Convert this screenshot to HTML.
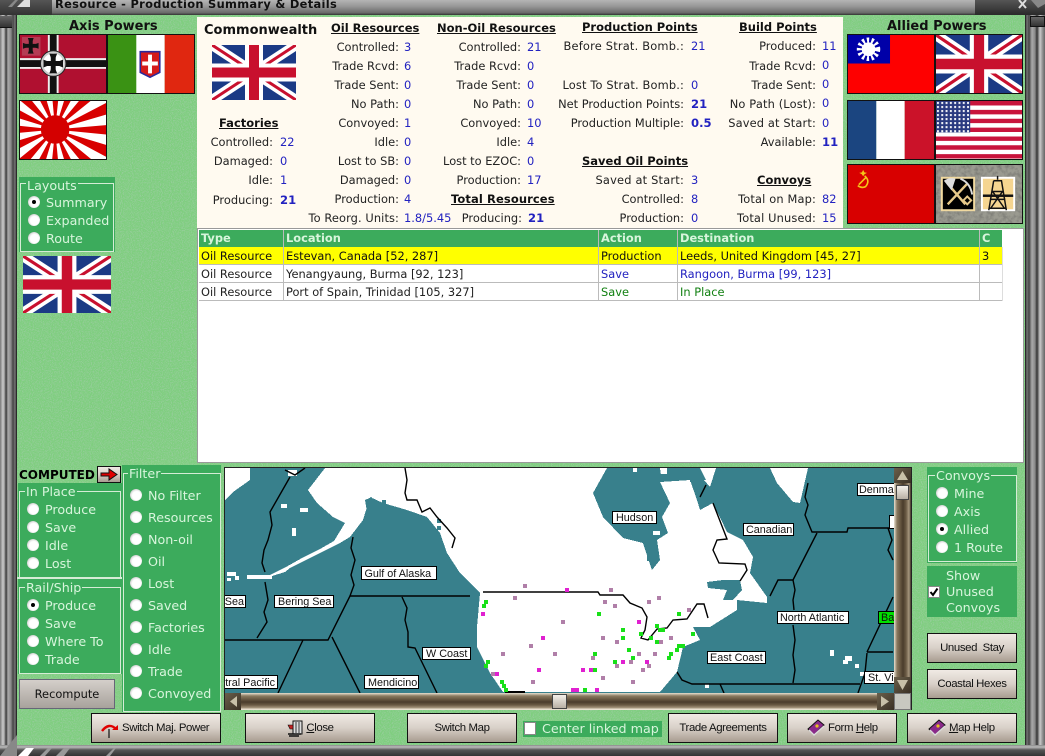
<!DOCTYPE html>
<html><head><meta charset="utf-8"><title>Resource - Production Summary &amp; Details</title>
<style>
html,body{margin:0;padding:0;background:#333;}
#p{position:relative;width:1045px;height:756px;overflow:hidden;font-family:"DejaVu Sans",sans-serif;font-size:11.4px;color:#222;}
#p div,#p svg,#p b,#p i,#p u.h{position:absolute;}
i{font-style:normal;white-space:nowrap;line-height:14px;}
.v{color:#2222c0;}
b.v{font-weight:bold;font-size:11.6px;line-height:14px;white-space:nowrap;}
u.h{font-weight:bold;font-size:11.5px;line-height:14px;white-space:nowrap;color:#111;}
.g{background:#3cab5c;}
.f{border:1.5px solid #d6ecd6;box-sizing:border-box;}
.t{color:#d8f5dc;font-size:12.7px;line-height:16px;white-space:nowrap;}
.lg{background:#3cab5c;padding:0 1px;}
.r{width:12px;height:12px;border-radius:50%;background:radial-gradient(circle at 55% 55%,#fff 45%,#e4e4e4 62%,#888 100%);}
.r.c::after{content:"";position:absolute;left:4px;top:4px;width:4px;height:4px;border-radius:50%;background:#000;}
.b{box-sizing:border-box;border:1px solid #111;background:linear-gradient(180deg,#f0eae4 0%,#d8d0c8 50%,#a89c90 100%);font-family:"Liberation Sans",sans-serif;font-size:11.4px;letter-spacing:-.38px;color:#111;text-align:center;line-height:27px;white-space:nowrap;}
.fl{box-sizing:border-box;border:1.5px solid #111;overflow:hidden;}
.fl svg{left:0;top:0;width:100%;height:100%;}
.tb{font-weight:bold;color:#d8f5dc;}
.row{left:199px;width:803px;height:18px;border-bottom:1px solid #bbb;box-sizing:border-box;}
</style></head><body><div id="p">

<svg width="0" height="0" style="left:0;top:0"><defs>
<symbol id="uk" viewBox="0 0 84 55" preserveAspectRatio="none">
<rect width="84" height="55" fill="#1b3a85"/>
<path d="M0 0L84 55M84 0L0 55" stroke="#fff" stroke-width="10"/>
<path d="M0 0L42 27.5M84 55L42 27.5M84 0L42 27.5M0 55L42 27.5" stroke="#c8102e" stroke-width="3"/>
<path d="M42 0V55M0 27.5H84" stroke="#fff" stroke-width="18"/>
<path d="M42 0V55M0 27.5H84" stroke="#c8102e" stroke-width="10"/>
</symbol>
<filter id="nz" x="0" y="0" width="100%" height="100%"><feTurbulence type="fractalNoise" baseFrequency="0.9" numOctaves="2" seed="4"/><feColorMatrix values="0 0 0 0 .3  0 0 0 0 .62  0 0 0 0 .32  4 0 0 0 -1.75"/></filter>
<pattern id="st" width="4.4" height="4.1" patternUnits="userSpaceOnUse"><rect width="4.4" height="4.1" fill="#2a3a80"/><rect x="1" y="1" width="2" height="2" fill="#fff"/></pattern>
</defs></svg>

<!-- background -->
<div style="left:0;top:0;width:1045px;height:756px;background:#7fce7f"></div>
<svg style="left:17px;top:15px" width="1008" height="731"><rect width="1008" height="731" filter="url(#nz)"/></svg>

<!-- window chrome -->
<div style="left:0;top:0;width:1045px;height:15px;background:linear-gradient(180deg,#b5b5b5,#999 40%,#6a6a6a 85%,#333)"></div>
<div style="left:0;top:0;width:52px;height:15px;background:linear-gradient(180deg,#555,#333)"></div>
<svg style="left:8px;top:0" width="22" height="8"><path d="M9 7L16 0H22V7Z" fill="#ddd"/><path d="M0 7L7 0H10L4 7Z" fill="#888"/></svg>
<div style="left:975px;top:0;width:70px;height:15px;background:linear-gradient(180deg,#555,#2a2a2a)"></div>
<svg style="left:1018px;top:0" width="27" height="9"><path d="M1 0L8 8M8 0L1 8" stroke="#ddd" stroke-width="2"/><path d="M13 0H27V4L20 8Z" fill="#888"/></svg>
<i style="left:55px;top:-3px;font-weight:bold;font-size:11.4px;line-height:14px;letter-spacing:.32px;color:#111">Resource - Production Summary &amp; Details</i>

<div style="left:0;top:15px;width:17px;height:741px;background:linear-gradient(90deg,#777 0,#ccc 3px,#888 5px,#333 6px,#aaa 8px,#888 11px,#444 13px,#777 15px,#111 17px)"></div>
<div style="left:0;top:16px;width:12px;height:11px;background:linear-gradient(180deg,#666,#333);border-bottom:1px solid #111"></div>
<div style="left:1025px;top:15px;width:20px;height:741px;background:linear-gradient(90deg,#111 0,#777 2px,#444 4px,#aaa 7px,#888 10px,#333 12px,#ccc 15px,#888 18px,#666 20px)"></div>
<div style="left:1030px;top:16px;width:15px;height:11px;background:linear-gradient(180deg,#666,#333);border:1px solid #111;box-sizing:border-box"></div>
<div style="left:0;top:745px;width:1045px;height:11px;background:linear-gradient(180deg,#888,#bbb 2px,#555 5px,#333 11px)"></div>
<svg style="left:16px;top:746px" width="100" height="10"><path d="M2 10L10 2H18L12 10Z" fill="#fff"/><path d="M24 10L32 2H36L29 10ZM40 10L48 2H54L48 10Z" fill="#999"/><path d="M90 10L98 2H100L94 10Z" fill="#999"/></svg>
<svg style="left:0;top:735px" width="17" height="21"><path d="M0 21L17 0V21Z" fill="#888"/></svg>

<!-- Axis -->
<i style="left:69px;top:20px;font-weight:bold;font-size:13px;color:#111">Axis Powers</i>
<div class="fl" style="left:19px;top:34px;width:88px;height:60px"><svg viewBox="0 0 88 59" preserveAspectRatio="none">
<rect width="88" height="59" fill="#b01030"/>
<path d="M34 0V59M0 29H88" stroke="#eee" stroke-width="11"/><path d="M34 0V59M0 29H88" stroke="#111" stroke-width="7"/>
<circle cx="34" cy="29" r="13" fill="#ccc" stroke="#222"/><circle cx="34" cy="29" r="10.5" fill="#fff"/>
<path d="M34 20V38M25 29H43" stroke="#111" stroke-width="5"/><path d="M30 19H38L34 29ZM30 39H38L34 29ZM24 25V33L34 29ZM44 25V33L34 29Z" fill="#111"/>
<rect x="2" y="2" width="19" height="19" fill="#c0c0c0" opacity=".25"/>
<path d="M11 4V18M4 11H18" stroke="#111" stroke-width="4"/><path d="M8 3H14L11 11ZM8 19H14L11 11ZM3 8V14L11 11ZM19 8V14L11 11Z" fill="#111"/>
</svg></div>
<div class="fl" style="left:107px;top:34px;width:88px;height:60px"><svg viewBox="0 0 88 59" preserveAspectRatio="none">
<rect width="29" height="59" fill="#3a9214"/><rect x="29" width="29" height="59" fill="#fff"/><rect x="58" width="30" height="59" fill="#e02710"/>
<path d="M33 17H53V38L43 43L33 38Z" fill="#d41a1a" stroke="#2a2a9a" stroke-width="1.6"/><path d="M43 20V39M35 29H51" stroke="#fff" stroke-width="4"/>
</svg></div>
<div class="fl" style="left:19px;top:100px;width:88px;height:60px"><svg viewBox="0 0 88 59" preserveAspectRatio="xMidYMid slice">
<rect width="88" height="59" fill="#fff"/>
<circle cx="36" cy="29" r="50" fill="none" stroke="#d80000" stroke-width="100" stroke-dasharray="9.817 9.817" stroke-dashoffset="4.9"/>
<circle cx="36" cy="29" r="14.5" fill="#d40000"/>
</svg></div>

<!-- Layouts -->
<div class="g" style="left:19px;top:177px;width:96px;height:75px"></div>
<div class="f" style="left:20px;top:183px;width:94px;height:69px"></div>
<div class="t lg" style="left:26px;top:178px">Layouts</div>
<div class="r c" style="left:28px;top:196px"></div><div class="t" style="left:46px;top:195px">Summary</div>
<div class="r" style="left:28px;top:214px"></div><div class="t" style="left:46px;top:213px">Expanded</div>
<div class="r" style="left:28px;top:232px"></div><div class="t" style="left:46px;top:231px">Route</div>
<svg style="left:23px;top:256px" width="88" height="57"><use href="#uk" width="88" height="57"/></svg>

<!-- Summary panel -->
<div style="left:197px;top:17px;width:646px;height:211px;background:#fffaf0"></div>
<i style="left:204px;top:24px;font-weight:bold;font-size:13px;color:#111">Commonwealth</i>
<svg style="left:212px;top:45px" width="84" height="55"><use href="#uk" width="84" height="55"/></svg>

<u class="h" style="left:219px;top:116px">Factories</u>
<i style="right:772px;top:135px">Controlled:</i><i class="v" style="left:280px;top:135px">22</i>
<i style="right:772px;top:154px">Damaged:</i><i class="v" style="left:280px;top:154px">0</i>
<i style="right:772px;top:173px">Idle:</i><i class="v" style="left:280px;top:173px">1</i>
<i style="right:772px;top:193px">Producing:</i><b class="v" style="left:280px;top:193px">21</b>

<u class="h" style="left:331px;top:21px">Oil Resources</u>
<i style="right:646px;top:40px">Controlled:</i><i class="v" style="left:404px;top:40px">3</i>
<i style="right:646px;top:59px">Trade Rcvd:</i><i class="v" style="left:404px;top:59px">6</i>
<i style="right:646px;top:78px">Trade Sent:</i><i class="v" style="left:404px;top:78px">0</i>
<i style="right:646px;top:97px">No Path:</i><i class="v" style="left:404px;top:97px">0</i>
<i style="right:646px;top:116px">Convoyed:</i><i class="v" style="left:404px;top:116px">1</i>
<i style="right:646px;top:135px">Idle:</i><i class="v" style="left:404px;top:135px">0</i>
<i style="right:646px;top:154px">Lost to SB:</i><i class="v" style="left:404px;top:154px">0</i>
<i style="right:646px;top:173px">Damaged:</i><i class="v" style="left:404px;top:173px">0</i>
<i style="right:646px;top:192px">Production:</i><i class="v" style="left:404px;top:192px">4</i>
<i style="right:646px;top:211px;letter-spacing:.1px">To Reorg. Units:</i><i class="v" style="left:404px;top:211px">1.8/5.45</i>

<u class="h" style="left:437px;top:21px">Non-Oil Resources</u>
<i style="right:524px;top:40px">Controlled:</i><i class="v" style="left:527px;top:40px">21</i>
<i style="right:524px;top:59px">Trade Rcvd:</i><i class="v" style="left:527px;top:59px">0</i>
<i style="right:524px;top:78px">Trade Sent:</i><i class="v" style="left:527px;top:78px">0</i>
<i style="right:524px;top:97px">No Path:</i><i class="v" style="left:527px;top:97px">0</i>
<i style="right:524px;top:116px">Convoyed:</i><i class="v" style="left:527px;top:116px">10</i>
<i style="right:524px;top:135px">Idle:</i><i class="v" style="left:527px;top:135px">4</i>
<i style="right:524px;top:154px">Lost to EZOC:</i><i class="v" style="left:527px;top:154px">0</i>
<i style="right:524px;top:173px">Production:</i><i class="v" style="left:527px;top:173px">17</i>
<u class="h" style="left:451px;top:192px;letter-spacing:.1px">Total Resources</u>
<i style="right:523px;top:211px">Producing:</i><b class="v" style="left:528px;top:211px">21</b>

<u class="h" style="left:582px;top:20px">Production Points</u>
<i style="right:361px;top:39px;letter-spacing:.2px">Before Strat. Bomb.:</i><i class="v" style="left:691px;top:39px">21</i>
<i style="right:361px;top:78px;letter-spacing:.15px">Lost To Strat. Bomb.:</i><i class="v" style="left:691px;top:78px">0</i>
<i style="right:361px;top:97px">Net Production Points:</i><b class="v" style="left:691px;top:97px">21</b>
<i style="right:361px;top:116px">Production Multiple:</i><b class="v" style="left:691px;top:116px">0.5</b>
<u class="h" style="left:582px;top:154px">Saved Oil Points</u>
<i style="right:361px;top:173px;letter-spacing:.2px">Saved at Start:</i><i class="v" style="left:691px;top:173px">3</i>
<i style="right:361px;top:192px">Controlled:</i><i class="v" style="left:691px;top:192px">8</i>
<i style="right:361px;top:211px">Production:</i><i class="v" style="left:691px;top:211px">0</i>

<u class="h" style="left:739px;top:20px">Build Points</u>
<i style="right:229px;top:39px">Produced:</i><i class="v" style="left:822px;top:39px">11</i>
<i style="right:229px;top:59px">Trade Rcvd:</i><i class="v" style="left:822px;top:58px">0</i>
<i style="right:229px;top:78px">Trade Sent:</i><i class="v" style="left:822px;top:77px">0</i>
<i style="right:229px;top:97px;letter-spacing:.15px">No Path (Lost):</i><i class="v" style="left:822px;top:96px">0</i>
<i style="right:229px;top:116px;letter-spacing:.15px">Saved at Start:</i><i class="v" style="left:822px;top:116px">0</i>
<i style="right:229px;top:135px">Available:</i><b class="v" style="left:822px;top:135px">11</b>
<u class="h" style="left:757px;top:173px">Convoys</u>
<i style="right:229px;top:192px;letter-spacing:.15px">Total on Map:</i><i class="v" style="left:822px;top:192px">82</i>
<i style="right:229px;top:211px;letter-spacing:.15px">Total Unused:</i><i class="v" style="left:822px;top:211px">15</i>

<!-- Allied -->
<i style="left:887px;top:20px;font-weight:bold;font-size:13px;color:#111">Allied Powers</i>
<div class="fl" style="left:847px;top:34px;width:88px;height:60px"><svg viewBox="0 0 88 59" preserveAspectRatio="none">
<rect width="88" height="59" fill="#fe0000"/><rect width="43" height="29" fill="#0000a8"/>
<circle cx="21" cy="14.5" r="8" fill="none" stroke="#fff" stroke-width="8" stroke-dasharray="2 2"/><circle cx="21" cy="14.5" r="7" fill="#fff"/>
</svg></div>
<div class="fl" style="left:935px;top:34px;width:88px;height:60px"><svg viewBox="0 0 88 59" preserveAspectRatio="none"><use href="#uk" width="88" height="59"/></svg></div>
<div class="fl" style="left:847px;top:100px;width:88px;height:60px"><svg viewBox="0 0 88 59" preserveAspectRatio="none">
<rect width="29" height="59" fill="#1b4580"/><rect x="29" width="29" height="59" fill="#fff"/><rect x="58" width="30" height="59" fill="#cb1229"/>
</svg></div>
<div class="fl" style="left:935px;top:100px;width:88px;height:60px"><svg viewBox="0 0 88 59" preserveAspectRatio="none">
<rect width="88" height="59" fill="#fff"/>
<path d="M0 2.3H88M0 11.3H88M0 20.3H88M0 29.3H88M0 38.3H88M0 47.3H88M0 56.3H88" stroke="#c8143c" stroke-width="4.5"/>
<rect width="35" height="32" fill="url(#st)"/>
</svg></div>
<div class="fl" style="left:847px;top:164px;width:88px;height:60px"><svg viewBox="0 0 88 59" preserveAspectRatio="none">
<rect width="88" height="59" fill="#d80000"/>
<path d="M11 20L18 13M17 11Q23 16 18 22Q14 24 10 21" fill="none" stroke="#f5c518" stroke-width="1.6"/><path d="M15.5 5L16.8 7.5L19.5 8L17 9.3L15.5 11.5L14 9.3L11.5 8L14.2 7.5Z" fill="#f5c518"/>
</svg></div>
<div class="fl" style="left:935px;top:164px;width:88px;height:60px;background:#85857c"><svg viewBox="0 0 88 59" preserveAspectRatio="none">
<defs><filter id="stn" x="0" y="0" width="100%" height="100%"><feTurbulence type="fractalNoise" baseFrequency=".25" numOctaves="3" seed="7"/><feColorMatrix values="0 0 0 0 .2 0 0 0 0 .2 0 0 0 0 .18 2.2 0 0 0 -.85"/></filter></defs>
<rect width="88" height="59" fill="#9a9a90"/><rect width="88" height="59" filter="url(#stn)"/>
<rect x="6" y="13" width="33" height="33" fill="#000" stroke="#f0d9a0" stroke-width="2"/>
<path d="M12 40L32 19M12 19L30 40" stroke="#e6c98a" stroke-width="2.5"/><path d="M8 16Q14 12 20 14L16 26Z" fill="#ddd"/><path d="M25 14Q35 18 37 30" fill="none" stroke="#ddd" stroke-width="2"/><path d="M28 36L32 32L36 36L32 40Z" fill="none" stroke="#e6c98a" stroke-width="2"/>
<rect x="47" y="13" width="33" height="33" fill="#f5d590" stroke="#fff" stroke-width="2"/>
<path d="M63 11V15M59 16H67L72 46M59 16L54 46M57 27H69M56 35H71M55 44H72M58 27L70 44M68 27L56 44" fill="none" stroke="#111" stroke-width="1.5"/><rect x="48" y="30" width="31" height="2.5" fill="#111"/>
</svg></div>

<!-- Table -->
<div style="left:197px;top:228px;width:827px;height:235px;background:#fff;border:1px solid #999;box-sizing:border-box"></div>
<div class="g" style="left:199px;top:230px;width:781px;height:17px"></div>
<div class="g" style="left:980px;top:230px;width:22px;height:17px"></div>
<div style="left:199px;top:247px;width:803px;height:18px;background:#ffff00"></div>
<div class="row" style="top:247px"></div><div class="row" style="top:265px"></div><div class="row" style="top:283px"></div>
<div style="left:283px;top:230px;width:1px;height:71px;background:#bbb"></div>
<div style="left:598px;top:230px;width:1px;height:71px;background:#bbb"></div>
<div style="left:677px;top:230px;width:1px;height:71px;background:#bbb"></div>
<div style="left:979px;top:230px;width:1px;height:71px;background:#bbb"></div>
<div style="left:1002px;top:247px;width:1px;height:54px;background:#ddd"></div>
<i class="tb" style="left:201px;top:231px">Type</i><i class="tb" style="left:286px;top:231px">Location</i><i class="tb" style="left:601px;top:231px">Action</i><i class="tb" style="left:680px;top:231px">Destination</i><i class="tb" style="left:982px;top:231px">C</i>
<i style="left:201px;top:249px;color:#111">Oil Resource</i><i style="left:286px;top:249px;color:#111">Estevan, Canada [52, 287]</i><i style="left:601px;top:249px;color:#111">Production</i><i style="left:680px;top:249px;color:#111">Leeds, United Kingdom [45, 27]</i><i style="left:982px;top:249px;color:#111">3</i>
<i style="left:201px;top:267px">Oil Resource</i><i style="left:286px;top:267px">Yenangyaung, Burma [92, 123]</i><i style="left:601px;top:267px;color:#2222c0">Save</i><i style="left:680px;top:267px;color:#2222c0">Rangoon, Burma [99, 123]</i>
<i style="left:201px;top:285px">Oil Resource</i><i style="left:286px;top:285px">Port of Spain, Trinidad [105, 327]</i><i style="left:601px;top:285px;color:#128012">Save</i><i style="left:680px;top:285px;color:#128012">In Place</i>

<!-- Computed -->
<i style="left:19px;top:468px;font-weight:bold;font-size:12px;color:#000">COMPUTED</i>
<div class="b" style="left:97px;top:466px;width:24px;height:17px"></div>
<svg style="left:100px;top:468px" width="19" height="13"><path d="M1 5H9V1L17 6.5L9 12V8H1Z" fill="#e00000" stroke="#111" stroke-width="1"/></svg>

<!-- In place / rail -->
<div class="g" style="left:18px;top:483px;width:104px;height:191px"></div>
<div class="f" style="left:19px;top:491px;width:102px;height:87px"></div>
<div class="f" style="left:19px;top:587px;width:102px;height:87px"></div>
<div style="left:17px;top:577px;width:105px;height:2px;background:#d6ecd6"></div>
<div class="t lg" style="left:25px;top:484px">In Place</div>
<div class="r" style="left:27px;top:503px"></div><div class="t" style="left:45px;top:502px">Produce</div>
<div class="r" style="left:27px;top:521px"></div><div class="t" style="left:45px;top:520px">Save</div>
<div class="r" style="left:27px;top:539px"></div><div class="t" style="left:45px;top:538px">Idle</div>
<div class="r" style="left:27px;top:557px"></div><div class="t" style="left:45px;top:556px">Lost</div>
<div class="t lg" style="left:25px;top:580px">Rail/Ship</div>
<div class="r c" style="left:27px;top:599px"></div><div class="t" style="left:45px;top:598px">Produce</div>
<div class="r" style="left:27px;top:617px"></div><div class="t" style="left:45px;top:616px">Save</div>
<div class="r" style="left:27px;top:635px"></div><div class="t" style="left:45px;top:634px">Where To</div>
<div class="r" style="left:27px;top:653px"></div><div class="t" style="left:45px;top:652px">Trade</div>

<div class="b" style="left:19px;top:679px;width:96px;height:30px;border-color:#667;background:linear-gradient(180deg,#d4cfca,#a8a29c);font-family:'DejaVu Sans',sans-serif;font-size:11.4px;letter-spacing:0;line-height:28px">Recompute</div>

<!-- Filter -->
<div class="g" style="left:122px;top:465px;width:99px;height:247px"></div>
<div class="f" style="left:123px;top:473px;width:98px;height:239px"></div>
<div class="t lg" style="left:128px;top:466px">Filter</div>
<div class="r" style="left:130px;top:489px"></div><div class="t" style="left:148px;top:488px">No Filter</div>
<div class="r" style="left:130px;top:511px"></div><div class="t" style="left:148px;top:510px">Resources</div>
<div class="r" style="left:130px;top:533px"></div><div class="t" style="left:148px;top:532px">Non-oil</div>
<div class="r" style="left:130px;top:555px"></div><div class="t" style="left:148px;top:554px">Oil</div>
<div class="r" style="left:130px;top:577px"></div><div class="t" style="left:148px;top:576px">Lost</div>
<div class="r" style="left:130px;top:599px"></div><div class="t" style="left:148px;top:598px">Saved</div>
<div class="r" style="left:130px;top:621px"></div><div class="t" style="left:148px;top:620px">Factories</div>
<div class="r" style="left:130px;top:643px"></div><div class="t" style="left:148px;top:642px">Idle</div>
<div class="r" style="left:130px;top:665px"></div><div class="t" style="left:148px;top:664px">Trade</div>
<div class="r" style="left:130px;top:687px"></div><div class="t" style="left:148px;top:686px">Convoyed</div>

<!-- Map -->
<div style="left:224px;top:467px;width:688px;height:243px;background:#222"></div>
<svg style="left:225px;top:468px" width="669" height="225" viewBox="225 468 669 225" font-family="'Liberation Sans',sans-serif" font-size="10.8">
<rect x="225" y="468" width="669" height="225" fill="#38808c"/>
<g fill="#fff" shape-rendering="crispEdges">
<path d="M225 468H250V480L233 492L225 500Z"/>
<path d="M325 468H590L607 468L593 493L603 517L623 538L643 543L652 570L660 560L657 540L668 533L662 517L670 503L660 482L690 480L697 500L700 510L713 503L727 532L743 540L753 557L750 573L767 597L767 603L737 600L737 610L710 627L693 627L700 640L683 647L677 672L660 692H503L490 673L477 647L477 627L480 593L460 573L447 553L440 533L427 517L407 510L383 503L370 497L363 520L350 537L340 543L322 552L306 560L290 568L285 572L272 576V579H247V575H270L286 567L302 558L320 549L334 541L345 523L333 517L317 503L308 490Z"/>
<path d="M770 468H808L800 503L793 502L777 483Z"/>
<path d="M700 468H716L710 487L704 480Z"/>
<rect x="227" y="572" width="9" height="4"/><rect x="235" y="576" width="4" height="4"/>
<rect x="227" y="578" width="4" height="3"/><rect x="281" y="504" width="6" height="4"/><rect x="292" y="528" width="4" height="8"/>
<rect x="300" y="508" width="8" height="4"/><rect x="288" y="470" width="9" height="6"/>
<rect x="830" y="650" width="4" height="6"/><rect x="845" y="656" width="7" height="5"/><rect x="843" y="660" width="5" height="4"/>
<rect x="855" y="664" width="4" height="4"/><rect x="860" y="672" width="4" height="4"/><rect x="705" y="684" width="4" height="4"/>
<rect x="633" y="468" width="4" height="4"/><rect x="642" y="472" width="5" height="6"/><rect x="660" y="468" width="7" height="6"/>
<rect x="653" y="531" width="7" height="4"/>
</g>
<g fill="#38808c" shape-rendering="crispEdges">
<path d="M707 582L723 580L740 580L742 590L733 600L723 600L727 590L708 588Z"/>
<rect x="437" y="519" width="4" height="4"/><rect x="437" y="526" width="4" height="4"/>
<path d="M690 468H700L706 480L690 482Z"/>
<path d="M365 500L372 497L376 510L368 518Z"/>
<rect x="382" y="500" width="4" height="6"/>
<path d="M640 468H660L662 482L640 478Z"/>
<rect x="647" y="556" width="5" height="5"/>
</g>
<g fill="none" stroke="#000" stroke-width="1.4">
<path d="M290 477L270 512L272 525L268 540L264 550L262 563L265 572M265 582L268 600L264 612L267 622L262 630L257 638"/>
<path d="M225 640H328L350 596H470M303 640L278 693M332 637L360 693"/>
<path d="M350 596L354 585L351 575L355 560L351 548L353 537"/>
<path d="M402 597L407 608L405 620L408 632L408 647L415 648L437 693"/>
<path d="M405 468L407 480L405 493L407 500H417L422 512L430 508L437 517L447 528L455 538L452 548"/>
<path d="M285 470L295 475L305 468"/>
<path d="M483 592H598L600 595H623L630 603L642 608L647 617L645 630L641 638L648 640L657 629L667 628L673 620L687 619L697 604H704L708 618"/>
<path d="M505 692H525" stroke-width="2"/>
<path d="M713 503L727 539L717 540L713 550L719 563L745 564L747 570L740 581"/>
<path d="M700 497L706 485"/>
<path d="M808 483L805 497L808 505L805 515L812 532H847L848 528H893"/>
<path d="M817 533L793 580H778L770 596"/>
<path d="M793 580L795 590L793 600L794 610M793 625L795 640L793 655L795 670L793 683"/>
<path d="M677 672L682 680L692 684H860M720 684L724 693"/>
<path d="M867 652H893M867 652L893 597M867 653L865 673L858 693"/>
<path d="M888 528L892 540L888 550L893 560"/>
</g>
<g shape-rendering="crispEdges">
<g fill="#b07fa8"><rect x="523" y="584" width="4" height="4"/><rect x="513" y="596" width="4" height="4"/><rect x="561" y="620" width="4" height="4"/><rect x="529" y="644" width="4" height="4"/><rect x="501" y="652" width="4" height="4"/><rect x="553" y="652" width="4" height="4"/><rect x="491" y="672" width="4" height="4"/><rect x="531" y="680" width="4" height="4"/><rect x="609" y="588" width="4" height="4"/><rect x="603" y="600" width="4" height="4"/><rect x="613" y="604" width="4" height="4"/><rect x="647" y="600" width="4" height="4"/><rect x="657" y="596" width="4" height="4"/><rect x="687" y="608" width="4" height="4"/><rect x="601" y="636" width="4" height="4"/><rect x="615" y="640" width="4" height="4"/><rect x="659" y="640" width="4" height="4"/><rect x="669" y="636" width="4" height="4"/><rect x="591" y="656" width="4" height="4"/><rect x="637" y="652" width="4" height="4"/><rect x="653" y="652" width="4" height="4"/><rect x="629" y="660" width="4" height="4"/><rect x="615" y="664" width="4" height="4"/><rect x="647" y="664" width="4" height="4"/><rect x="641" y="668" width="4" height="4"/><rect x="601" y="676" width="4" height="4"/><rect x="631" y="680" width="4" height="4"/></g>
<g fill="#e020d0"><rect x="565" y="588" width="4" height="4"/><rect x="481" y="612" width="4" height="4"/><rect x="541" y="636" width="4" height="4"/><rect x="537" y="668" width="4" height="4"/><rect x="495" y="672" width="4" height="4"/><rect x="637" y="620" width="4" height="4"/><rect x="621" y="660" width="4" height="4"/><rect x="645" y="660" width="4" height="4"/><rect x="581" y="668" width="4" height="4"/><rect x="589" y="668" width="4" height="4"/><rect x="571" y="688" width="8" height="4"/><rect x="595" y="688" width="4" height="4"/></g>
<g fill="#18e018"><rect x="484" y="600" width="4" height="4"/><rect x="482" y="604" width="4" height="4"/><rect x="486" y="660" width="4" height="4"/><rect x="484" y="664" width="4" height="4"/><rect x="500" y="680" width="4" height="4"/><rect x="502" y="684" width="4" height="4"/><rect x="504" y="688" width="4" height="4"/><rect x="597" y="612" width="4" height="4"/><rect x="677" y="612" width="4" height="4"/><rect x="621" y="628" width="4" height="4"/><rect x="621" y="636" width="4" height="4"/><rect x="639" y="632" width="4" height="4"/><rect x="655" y="624" width="4" height="4"/><rect x="658" y="628" width="7" height="4"/><rect x="649" y="636" width="4" height="4"/><rect x="655" y="640" width="4" height="4"/><rect x="691" y="632" width="4" height="4"/><rect x="627" y="648" width="4" height="4"/><rect x="593" y="652" width="4" height="4"/><rect x="631" y="656" width="4" height="4"/><rect x="613" y="660" width="4" height="4"/><rect x="593" y="668" width="4" height="4"/><rect x="669" y="652" width="4" height="4"/><rect x="667" y="656" width="4" height="4"/><rect x="675" y="648" width="4" height="4"/><rect x="677" y="644" width="8" height="4"/><rect x="583" y="688" width="4" height="4"/></g>
</g>
<g fill="#fff" stroke="#000" stroke-width="1" shape-rendering="crispEdges">
<rect x="361.5" y="566.5" width="75" height="13"/><rect x="274.5" y="595.5" width="59" height="12"/><rect x="224.5" y="595.5" width="21" height="12"/>
<rect x="422.5" y="647.5" width="48" height="12"/><rect x="364.5" y="675.5" width="54" height="13"/><rect x="224.5" y="675.5" width="53" height="13"/>
<rect x="612.5" y="511.5" width="44" height="12"/><rect x="743.5" y="523.5" width="50" height="12"/><rect x="777.5" y="611.5" width="71" height="12"/>
<rect x="707.5" y="651.5" width="58" height="12"/><rect x="857.5" y="483.5" width="40" height="12"/><rect x="878.5" y="611.5" width="20" height="12" fill="#00e000"/>
<rect x="864.5" y="671.5" width="34" height="12"/><rect x="889.5" y="515.5" width="8" height="13"/>
</g>
<g fill="#111">
<text x="364.5" y="577">Gulf of Alaska</text><text x="278" y="605">Bering Sea</text><text x="244" y="605" text-anchor="end">Sea</text>
<text x="426" y="657">W Coast</text><text x="368" y="686">Mendicino</text><text x="275" y="686" text-anchor="end">tral Pacific</text>
<text x="616" y="521">Hudson</text><text x="746" y="533">Canadian</text><text x="780" y="621">North Atlantic</text>
<text x="710" y="661">East Coast</text><text x="859" y="493">Denmark</text><text x="881" y="621">Ba</text><text x="868" y="681">St. Vi</text>
</g>
</svg>

<!-- Scrollbars -->
<div style="left:225px;top:693px;width:669px;height:17px;background:linear-gradient(180deg,#e8e0d0 0,#8a7a60 3px,#6a5a44 6px,#4a3c2c 9px,#6a5a44 12px,#a89880 15px,#e8e0d0 16px)"></div>
<div style="left:225px;top:693px;width:16px;height:17px;background:linear-gradient(135deg,#6a5f4a,#3a3024)"></div>
<svg style="left:225px;top:693px" width="16" height="17"><path d="M5 8.5L12 3V14Z" fill="#c8c0a8"/></svg>
<div style="left:877px;top:693px;width:17px;height:17px;background:linear-gradient(135deg,#6a5f4a,#3a3024)"></div>
<svg style="left:877px;top:693px" width="17" height="17"><path d="M12 8.5L4 3V14Z" fill="#c8c0a8"/></svg>
<div style="left:552px;top:694px;width:15px;height:15px;box-sizing:border-box;border:1px solid #444;background:linear-gradient(180deg,#f4f0ea,#b8b0a4)"></div>
<div style="left:894px;top:468px;width:17px;height:225px;background:linear-gradient(90deg,#e8e0d0 0,#8a7a60 3px,#6a5a44 6px,#4a3c2c 9px,#6a5a44 12px,#a89880 15px,#3a3024 17px)"></div>
<div style="left:894px;top:468px;width:17px;height:15px;background:linear-gradient(135deg,#6a5f4a,#3a3024)"></div>
<svg style="left:894px;top:468px" width="17" height="15"><path d="M8.5 3L14 12H3Z" fill="#c8c0a8"/></svg>
<div style="left:894px;top:677px;width:17px;height:16px;background:linear-gradient(135deg,#6a5f4a,#3a3024)"></div>
<svg style="left:894px;top:677px" width="17" height="16"><path d="M8.5 13L14 3H3Z" fill="#c8c0a8"/></svg>
<div style="left:896px;top:485px;width:13px;height:15px;box-sizing:border-box;border:1px solid #444;background:linear-gradient(180deg,#f4f0ea,#b8b0a4)"></div>
<div style="left:894px;top:693px;width:17px;height:17px;background:#c8c8c0;box-sizing:border-box;border:1px solid #777"></div>

<!-- Right controls -->
<div class="g" style="left:927px;top:467px;width:90px;height:96px"></div>
<div class="f" style="left:928px;top:475px;width:89px;height:87px"></div>
<div class="t lg" style="left:935px;top:468px">Convoys</div>
<div class="r" style="left:936px;top:487px"></div><div class="t" style="left:954px;top:486px">Mine</div>
<div class="r" style="left:936px;top:505px"></div><div class="t" style="left:954px;top:504px">Axis</div>
<div class="r c" style="left:936px;top:523px"></div><div class="t" style="left:954px;top:522px">Allied</div>
<div class="r" style="left:936px;top:541px"></div><div class="t" style="left:954px;top:540px">1 Route</div>
<div class="g" style="left:927px;top:566px;width:90px;height:51px"></div>
<div style="left:928px;top:586px;width:12px;height:12px;background:#fff;box-sizing:border-box;border:1px solid #888"></div>
<svg style="left:929px;top:587px" width="10" height="10"><path d="M1.5 5L4 8L8.5 1.5" fill="none" stroke="#000" stroke-width="2"/></svg>
<div class="t" style="left:946px;top:568px">Show</div><div class="t" style="left:946px;top:584px">Unused</div><div class="t" style="left:946px;top:600px">Convoys</div>
<div class="b" style="left:927px;top:633px;width:90px;height:30px;line-height:28px">Unused&nbsp; Stay</div>
<div class="b" style="left:927px;top:669px;width:90px;height:30px;line-height:28px">Coastal Hexes</div>

<!-- Bottom buttons -->
<div class="b" style="left:91px;top:713px;width:130px;height:30px;line-height:28px;text-align:left;padding-left:30px">Switch Maj. Power</div>
<svg style="left:101px;top:722px" width="18" height="17"><path d="M1 9Q8 0 15 7" fill="none" stroke="#e00000" stroke-width="2.4"/><path d="M11 8H17V3Z" fill="#e00000"/><path d="M8 7V16" stroke="#111" stroke-width="1.2"/></svg>
<div class="b" style="left:245px;top:713px;width:130px;height:30px;line-height:28px;padding-left:20px"><span style="text-decoration:underline">C</span>lose</div>
<svg style="left:287px;top:719px" width="17" height="18"><path d="M6 2H15V15H6Z" fill="#ddd" stroke="#111"/><path d="M9 3V14M12 3V14" stroke="#111" stroke-width=".8"/><path d="M1 6H6V10H3Z" fill="#c02020" stroke="#111" stroke-width=".6"/><path d="M1 15H14M2 17H12" stroke="#111" stroke-width="1.4"/></svg>
<div class="b" style="left:407px;top:713px;width:110px;height:30px;line-height:28px">Switch Map</div>
<div class="g" style="left:523px;top:721px;width:139px;height:16px"></div>
<div style="left:524px;top:722px;width:12px;height:13px;background:#fff;box-sizing:border-box;border:1px solid #888"></div>
<div class="t" style="left:542px;top:721px">Center linked map</div>
<div class="b" style="left:668px;top:713px;width:110px;height:30px;line-height:28px">Trade Agreements</div>
<div class="b" style="left:787px;top:713px;width:110px;height:30px;line-height:28px;text-align:left;padding-left:40px">Form <span style="text-decoration:underline">H</span>elp</div>
<svg style="left:807px;top:719px" width="18" height="17"><path d="M1 10L11 1L17 6L7 16Z" fill="#8a2a8a" stroke="#111"/><path d="M2 11L7 16L17 7" fill="none" stroke="#ddd" stroke-width="1.4"/><circle cx="10" cy="7" r="1.6" fill="#e8c020"/></svg>
<div class="b" style="left:907px;top:713px;width:110px;height:30px;line-height:28px;text-align:left;padding-left:41px"><span style="text-decoration:underline">M</span>ap Help</div>
<svg style="left:928px;top:719px" width="18" height="17"><path d="M1 10L11 1L17 6L7 16Z" fill="#8a2a8a" stroke="#111"/><path d="M2 11L7 16L17 7" fill="none" stroke="#ddd" stroke-width="1.4"/><circle cx="10" cy="7" r="1.6" fill="#e8c020"/></svg>

</div></body></html>
